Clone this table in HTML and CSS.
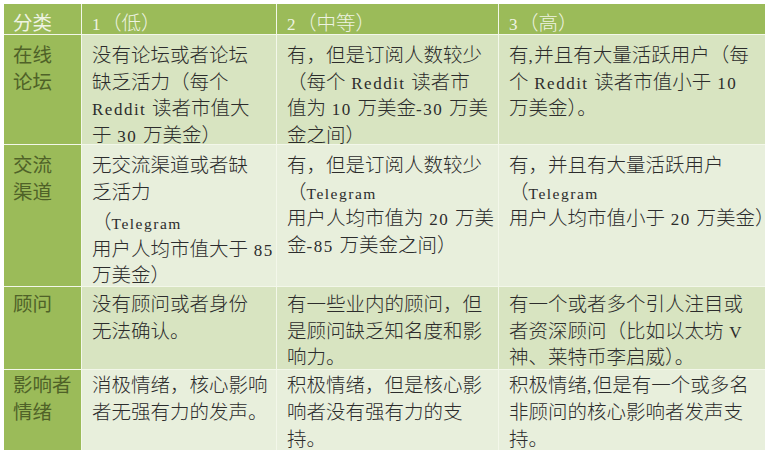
FILE: index.html
```html
<!DOCTYPE html>
<html lang="zh-CN">
<head>
<meta charset="utf-8">
<title>分类</title>
<link rel="stylesheet" href="styles.css">
</head>
<body>
<div class="table">
  <div class="c h k">分类</div>
  <div class="c h"><span class="en">1</span>（低）</div>
  <div class="c h"><span class="en">2</span>（中等）</div>
  <div class="c h"><span class="en">3</span>（高）</div>

  <div class="c k">在线<br>论坛</div>
  <div class="c odd">没有论坛或者论坛<br>缺乏活力（每个<br><span class="en">Reddit </span>读者市值大<br>于<span class="en"> 30 </span>万美金）</div>
  <div class="c odd">有，但是订阅人数较少<br>（每个<span class="en"> Reddit </span>读者市<br>值为<span class="en"> 10 </span>万美金<span class="en">-30 </span>万美<br>金之间）</div>
  <div class="c odd">有<span class="en">,</span>并且有大量活跃用户（每<br>个<span class="en"> Reddit </span>读者市值小于<span class="en"> 10</span><br>万美金）。</div>

  <div class="c k">交流<br>渠道</div>
  <div class="c even">无交流渠道或者缺<br>乏活力<div class="gap"><span class="tg">（<span class="en sm">Telegram</span></span><br>用户人均市值大于<span class="en"> 85</span><br>万美金）</div></div>
  <div class="c even">有，但是订阅人数较少<br><span class="tg">（<span class="en sm">Telegram</span></span><br>用户人均市值为<span class="en"> 20 </span>万美<br>金<span class="en">-85 </span>万美金之间）</div>
  <div class="c even">有，并且有大量活跃用户<br><span class="tg">（<span class="en sm">Telegram</span></span><br>用户人均市值小于<span class="en"> 20 </span>万美金）</div>

  <div class="c k mid">顾问</div>
  <div class="c odd mid">没有顾问或者身份<br>无法确认。</div>
  <div class="c odd mid">有一些业内的顾问，但<br>是顾问缺乏知名度和影<br>响力。</div>
  <div class="c odd mid">有一个或者多个引人注目或<br>者资深顾问（比如以太坊<span class="en"> V</span><br>神、莱特币李启威）。</div>

  <div class="c k last">影响者<br>情绪</div>
  <div class="c even last">消极情绪，核心影响<br>者无强有力的发声。</div>
  <div class="c even last">积极情绪，但是核心影<br>响者没有强有力的支<br>持。</div>
  <div class="c even last">积极情绪<span class="en">,</span>但是有一个或多名<br>非顾问的核心影响者发声支<br>持。</div>
</div>
</body>
</html>
```
FILE: styles.css
```css
html, body {
  margin: 0;
  padding: 0;
  background: #ffffff;
}
body {
  padding: 4px;
}
.table {
  display: grid;
  grid-template-columns: 77px 194px 221px 266px;
  grid-template-rows: 30px 109px 141px 82px 80px;
  gap: 1px;
  width: 761px;
  background: #f3f7ea;
  font-family: "Noto Sans CJK SC", sans-serif;
  font-weight: 300;
  font-size: 19.5px;
  line-height: 26.5px;
  color: #2c2c2c;
}
.c {
  padding: 6px 0 0 10px;
  white-space: nowrap;
}
.h {
  background: #9bbb59;
  color: #eef3e2;
  padding-top: 6px;
  line-height: 24px;
}
.k {
  background: #9bbb59;
  color: #4f6228;
  padding-left: 9px;
  font-weight: 400;
}
.h.k {
  color: #eef3e2;
}
.odd {
  background: #d8e4c1;
}
.even {
  background: #e8efdc;
}
.mid {
  padding-top: 3px;
  line-height: 26.5px;
}
.last {
  padding-top: 0;
  line-height: 27px;
}
.en {
  font-family: "Liberation Serif", serif;
  font-size: 17px;
  line-height: 16px;
  letter-spacing: 1.5px;
}
.en.sm {
  font-size: 15.5px;
}
.tg {
  line-height: 16px;
}
.gap {
  margin-top: 4px;
}
```
